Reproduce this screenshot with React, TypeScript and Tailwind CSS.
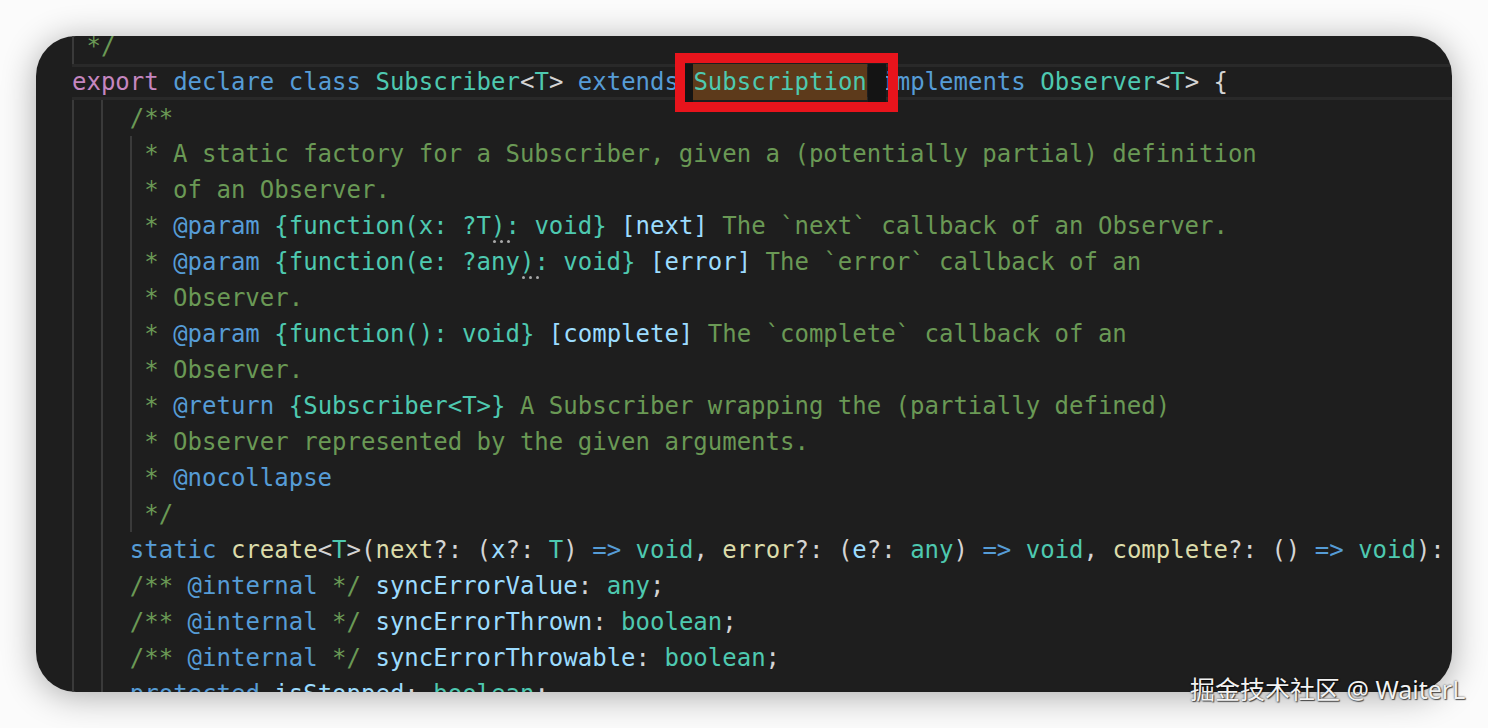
import React from 'react';

type Kind = 'mark' | 'dots';
type Tok = [string, string, Kind?];

interface Line {
  guides: string[];
  toks: Tok[];
  current?: boolean;
}

// VS Code Dark+ token colours
const cm = 'text-[#6a9955]';
const kw = 'text-[#569cd6]';
const ex = 'text-[#c586c0]';
const ty = 'text-[#4ec9b0]';
const pn = 'text-[#d4d4d4]';
const fn = 'text-[#dcdcaa]';
const vr = 'text-[#9cdcfe]';

const G1 = 'w-[1ch]';
const G2 = 'w-[2ch]';
const DOC = [G2, G2, G1];
const BODY = [G2, G2];

const internal = (name: string, type: string): Tok[] => [
  ['/** ', cm],
  ['@internal', kw],
  [' */', cm],
  [' ', pn],
  [name, vr],
  [': ', pn],
  [type, ty],
  [';', pn],
];

const lines: Line[] = [
  { guides: [G1], toks: [['*/', cm]] },
  {
    guides: [],
    current: true,
    toks: [
      ['export', ex], [' ', pn], ['declare', kw], [' ', pn], ['class', kw], [' ', pn],
      ['Subscriber', ty], ['<', pn], ['T', ty], ['> ', pn], ['extends', kw], [' ', pn],
      ['Subscription', ty, 'mark'], [' ', pn], ['implements', kw], [' ', pn],
      ['Observer', ty], ['<', pn], ['T', ty], ['> {', pn],
    ],
  },
  { guides: BODY, toks: [['/**', cm]] },
  { guides: DOC, toks: [['* A static factory for a Subscriber, given a (potentially partial) definition', cm]] },
  { guides: DOC, toks: [['* of an Observer.', cm]] },
  {
    guides: DOC,
    toks: [
      ['* ', cm], ['@param', kw], [' ', cm], ['{function(x: ?T', ty], [')', ty, 'dots'], [': void}', ty],
      [' ', cm], ['[next]', vr], [' The `next` callback of an Observer.', cm],
    ],
  },
  {
    guides: DOC,
    toks: [
      ['* ', cm], ['@param', kw], [' ', cm], ['{function(e: ?any', ty], [')', ty, 'dots'], [': void}', ty],
      [' ', cm], ['[error]', vr], [' The `error` callback of an', cm],
    ],
  },
  { guides: DOC, toks: [['* Observer.', cm]] },
  {
    guides: DOC,
    toks: [
      ['* ', cm], ['@param', kw], [' ', cm], ['{function(): void}', ty], [' ', cm],
      ['[complete]', vr], [' The `complete` callback of an', cm],
    ],
  },
  { guides: DOC, toks: [['* Observer.', cm]] },
  {
    guides: DOC,
    toks: [
      ['* ', cm], ['@return', kw], [' ', cm], ['{Subscriber<T>}', ty],
      [' A Subscriber wrapping the (partially defined)', cm],
    ],
  },
  { guides: DOC, toks: [['* Observer represented by the given arguments.', cm]] },
  { guides: DOC, toks: [['* ', cm], ['@nocollapse', kw]] },
  { guides: DOC, toks: [['*/', cm]] },
  {
    guides: BODY,
    toks: [
      ['static', kw], [' ', pn], ['create', fn], ['<', pn], ['T', ty], ['>(', pn],
      ['next', fn], ['?: (', pn], ['x', vr], ['?: ', pn], ['T', ty], [') ', pn], ['=>', kw], [' ', pn],
      ['void', ty], [', ', pn], ['error', fn], ['?: (', pn], ['e', vr], ['?: ', pn], ['any', ty],
      [') ', pn], ['=>', kw], [' ', pn], ['void', ty], [', ', pn], ['complete', fn], ['?: () ', pn],
      ['=>', kw], [' ', pn], ['void', ty], ['): ', pn], ['Subscriber', ty], ['<', pn], ['T', ty], ['>;', pn],
    ],
  },
  { guides: BODY, toks: internal('syncErrorValue', 'any') },
  { guides: BODY, toks: internal('syncErrorThrown', 'boolean') },
  { guides: BODY, toks: internal('syncErrorThrowable', 'boolean') },
  {
    guides: BODY,
    toks: [['protected', kw], [' ', pn], ['isStopped', vr], [': ', pn], ['boolean', ty], [';', pn]],
  },
];

const Token: React.FC<{ tok: Tok }> = ({ tok }) => {
  const [text, cls, kind] = tok;

  if (kind === 'mark') {
    return (
      <span className={`relative inline-block bg-[#5d3a1b] ${cls}`}>
        {text}
        <span className="absolute left-[-8px] top-0 h-[38px] w-[8px] bg-[#141414]" />
        <span className="absolute left-[175px] top-0 h-[38px] w-[18px] bg-[#141414]" />
        <span className="absolute left-[-18px] top-[-11px] h-[59px] w-[223px] border-[10px] border-[#e8141c]" />
      </span>
    );
  }

  if (kind === 'dots') {
    return (
      <span className={`relative inline-block ${cls}`}>
        {text}
        <span className="absolute left-[2px] top-[32px] flex gap-[4px]">
          <span className="h-[3px] w-[3px] rounded-full bg-[#a8a8a8]" />
          <span className="h-[3px] w-[3px] rounded-full bg-[#a8a8a8]" />
          <span className="h-[3px] w-[3px] rounded-full bg-[#a8a8a8]" />
        </span>
      </span>
    );
  }

  return <span className={cls}>{text}</span>;
};

const App: React.FC = () => {
  return (
    <div className="relative h-[728px] w-[1488px] overflow-hidden bg-[#fbfbfb] p-[36px]">
      {/* Editor panel */}
      <div className="h-[656px] w-full overflow-hidden rounded-[40px] bg-[#1e1e1e] pl-[36px] shadow-[0_4px_34px_rgba(0,0,0,0.32)]">
        <div className="-mt-[8px] font-['DejaVu_Sans_Mono',monospace] text-[24px] leading-9 whitespace-pre">
          {lines.map((line, i) => (
            <div
              key={i}
              className={
                line.current
                  ? 'flex h-9 items-center border-y-[3px] border-[#292929]'
                  : 'flex h-9 items-center'
              }
            >
              {line.guides.map((g, j) => (
                <span key={j} className={`${g} shrink-0 self-stretch border-l-2 border-[#3a3a3a]`} />
              ))}
              <span className="shrink-0">
                {line.toks.map((tok, k) => (
                  <Token key={k} tok={tok} />
                ))}
              </span>
            </div>
          ))}
        </div>
      </div>

      {/* Watermark */}
      <div className="absolute left-[1190px] top-[677px] font-['Noto_Sans','Noto_Sans_CJK_SC',sans-serif] text-[25px] leading-none text-[#f2f2f2] [text-shadow:0_0_2px_rgba(0,0,0,0.75),1px_1px_1px_rgba(0,0,0,0.6)]">
        掘金技术社区 @ WaiterL
      </div>
    </div>
  );
};

export default App;
